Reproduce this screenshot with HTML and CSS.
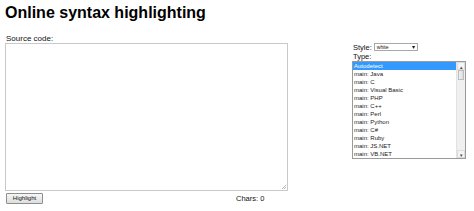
FILE: index.html
```html
<!DOCTYPE html>
<html lang="en">
<head>
    <meta charset="UTF-8">
    <title>Online syntax highlighting</title>
    <link rel="stylesheet" href="styles.css">
</head>
<body>
    <h1>Online syntax highlighting</h1>

    <div class="main">
        <div class="editor">
            <div class="label">Source code:</div>
            <div class="textarea">
                <span class="grip"></span>
            </div>
            <div class="footer">
                <button type="button" class="btn">Highlight</button>
                <span class="chars">Chars: 0</span>
            </div>
        </div>

        <div class="options">
            <div class="style-row">
                <span>Style:</span>
                <div class="dropdown">
                    <span>white</span>
                    <span class="caret">&#9662;</span>
                </div>
            </div>
            <div class="type-label">Type:</div>
            <div class="listbox">
                <ul class="items">
                    <li class="selected">Autodetect</li>
                    <li>main: Java</li>
                    <li>main: C</li>
                    <li>main: Visual Basic</li>
                    <li>main: PHP</li>
                    <li>main: C++</li>
                    <li>main: Perl</li>
                    <li>main: Python</li>
                    <li>main: C#</li>
                    <li>main: Ruby</li>
                    <li>main: JS.NET</li>
                    <li>main: VB.NET</li>
                </ul>
                <div class="scrollbar">
                    <span class="arrow">&#9652;</span>
                    <span class="thumb"></span>
                    <span class="track"></span>
                    <span class="arrow">&#9662;</span>
                </div>
            </div>
        </div>
    </div>
</body>
</html>
```

FILE: styles.css
```css
body {
    margin: 0;
    padding: 0 5px;
    font-family: "Liberation Sans", Arial, sans-serif;
    color: #000;
    background-color: #fff;
}
h1 {
    font-size: 16px;
    font-weight: bold;
    margin: 4px 0 0;
    line-height: 18px;
}
.main {
    display: flex;
}
.editor {
    width: 283px;
    margin-top: 12px;
}
.label {
    font-size: 8px;
    line-height: 9px;
    padding-left: 1px;
    color: #111;
}
.textarea {
    box-sizing: border-box;
    height: 148px;
    border: 1px solid #c9c9c9;
    position: relative;
}
.grip {
    position: absolute;
    right: 1px;
    bottom: 1px;
    width: 4px;
    height: 4px;
    background: linear-gradient(135deg, transparent 50%, #bbb 50%, #bbb 60%, transparent 60%, transparent 75%, #bbb 75%, #bbb 85%, transparent 85%);
}
.footer {
    display: flex;
    align-items: center;
    margin-top: 2px;
}
.btn {
    margin: 0 0 0 1px;
    padding: 0;
    width: 37px;
    height: 11px;
    font-family: inherit;
    font-size: 6px;
    line-height: 9px;
    color: #111;
    border: 1px solid #8e8e8e;
    border-radius: 1px;
    background: linear-gradient(#f6f6f6, #dedede);
}
.chars {
    font-size: 7.5px;
    margin-left: 193px;
    color: #111;
}
.options {
    margin-left: 64px;
    margin-top: 20px;
    width: 114px;
    font-size: 7.5px;
    color: #111;
}
.style-row {
    display: flex;
    align-items: center;
    height: 10px;
    padding-left: 1px;
}
.dropdown {
    box-sizing: border-box;
    display: flex;
    align-items: center;
    justify-content: space-between;
    width: 44px;
    height: 8px;
    margin-left: 2px;
    padding: 0 2px;
    border: 1px solid #a9a9a9;
    font-size: 5px;
    background: #fff;
}
.caret {
    font-size: 6px;
    line-height: 5px;
}
.type-label {
    height: 9px;
    line-height: 9px;
    padding-left: 1px;
}
.listbox {
    box-sizing: border-box;
    display: flex;
    height: 98px;
    border: 1px solid #9a9a9a;
    background: #fff;
}
.items {
    flex: 1;
    list-style: none;
    margin: 0;
    padding: 0;
    overflow: hidden;
}
.items li {
    height: 8px;
    line-height: 8px;
    font-size: 6px;
    padding-left: 1px;
    white-space: nowrap;
    color: #222;
}
.items li.selected {
    background-color: #3399ff;
    color: #fff;
}
.scrollbar {
    width: 8px;
    display: flex;
    flex-direction: column;
    background: #f0f0f0;
    border-left: 1px solid #e2e2e2;
}
.arrow {
    height: 8px;
    font-size: 5px;
    line-height: 8px;
    text-align: center;
    color: #444;
    background: #f4f4f4;
    border: 1px solid #dcdcdc;
    box-sizing: border-box;
}
.thumb {
    height: 10px;
    box-sizing: border-box;
    border: 1px solid #bcbcbc;
    background: linear-gradient(90deg, #f2f2f2, #dcdcdc);
    margin: 0 1px;
}
.track {
    flex: 1;
}
```
